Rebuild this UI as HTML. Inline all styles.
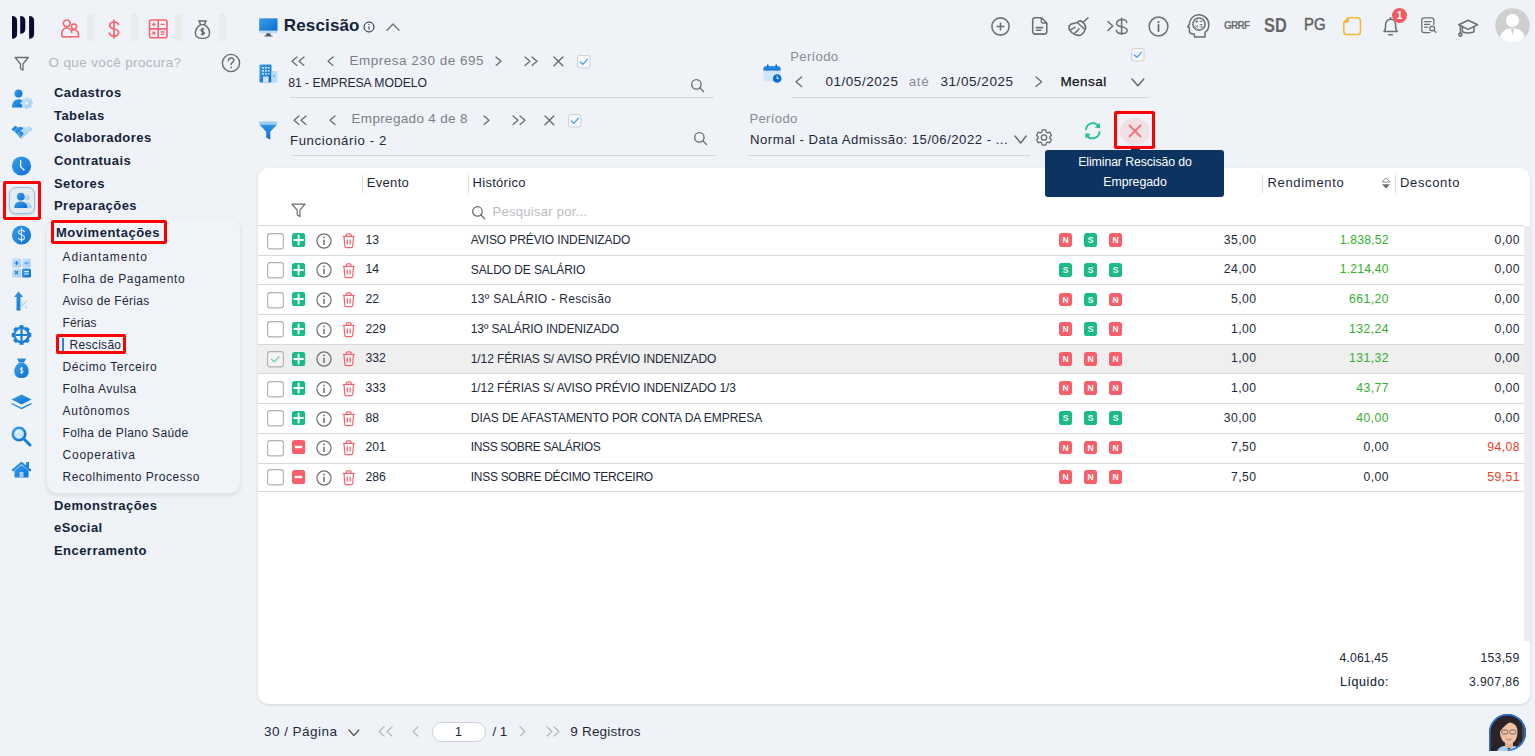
<!DOCTYPE html>
<html><head><meta charset="utf-8">
<style>
*{box-sizing:border-box;margin:0;padding:0}
html,body{width:1535px;height:756px;overflow:hidden;background:#eff3f8;font-family:"Liberation Sans",sans-serif;color:#1d2939;position:relative}
.a{position:absolute;white-space:nowrap}
svg{position:absolute;overflow:visible}
</style></head>
<body>
<svg style="left:0px;top:0px;" width="50" height="50" viewBox="0 0 50 50"><path d="M12 16 Q17.1 16 17.1 21.1 L17.1 33.699999999999996 Q17.1 38.8 12 38.8 Z" fill="#0c0a30"/><path d="M20.2 16 Q25.3 16 25.3 21.1 L25.3 28.699999999999996 Q25.3 33.8 20.2 33.8 Z" fill="#0c0a30"/><path d="M29.1 16 Q34.1 16 34.1 21.0 L34.1 33.8 Q34.1 38.8 29.1 38.8 Z" fill="#0c0a30"/></svg>
<div style="position:absolute;left:87px;top:14px;width:6.5px;height:26.5px;background:#ebebeb"></div>
<div style="position:absolute;left:131px;top:14px;width:6.5px;height:26.5px;background:#ebebeb"></div>
<div style="position:absolute;left:175px;top:14px;width:6.5px;height:26.5px;background:#ebebeb"></div>
<div style="position:absolute;left:219px;top:14px;width:6.5px;height:26.5px;background:#ebebeb"></div>
<svg style="left:60px;top:19px;" width="22" height="20" viewBox="0 0 22 20"><g fill="none" stroke="#f7636e" stroke-width="1.6"><circle cx="6.7" cy="4.3" r="3.3"/><path d="M1.8 17.6 V14 a5 5 0 0 1 10 0"/><circle cx="14" cy="7.6" r="2.6"/><path d="M9.5 17.8 H18.5 V15 a4.4 4.4 0 0 0 -6.6 -3.6"/><path d="M1.8 17.8 H11"/></g></svg>
<svg style="left:104px;top:18px;" width="20" height="22" viewBox="0 0 20 22"><g fill="none" stroke="#f7636e" stroke-width="1.7" stroke-linecap="round"><path d="M10 2 V20"/><path d="M14.5 6.5 C14 4.5 12 4 10 4 C7.5 4 5.6 5.3 5.6 7.6 C5.6 12.2 14.6 9.8 14.6 14.4 C14.6 16.8 12.5 18 10 18 C7.7 18 5.8 17.2 5.4 15"/></g></svg>
<svg style="left:148px;top:19px;" width="21" height="20" viewBox="0 0 21 20"><g fill="none" stroke="#f7636e" stroke-width="1.6"><rect x="1.5" y="1" width="17.5" height="17.8" rx="2"/><path d="M10.2 1 V18.8 M1.5 9.9 H19"/></g><g stroke="#f7636e" stroke-width="1.3"><path d="M4 5.4 H7.6 M5.8 3.6 V7.2 M12.6 5.4 H16.6 M4.3 12.6 L7.3 15.6 M7.3 12.6 L4.3 15.6 M12.6 13 H16.6 M12.6 15.4 H16.6"/></g></svg>
<svg style="left:194px;top:19px;" width="17" height="21" viewBox="0 0 17 21"><g fill="none" stroke="#6b6b6b" stroke-width="1.4"><path d="M5 2 H12 L10.4 5.6 H6.6 Z"/><path d="M6.6 5.6 C2 8.5 1 12 1.6 15.6 C2.2 18.6 4.6 19.4 8.5 19.4 C12.4 19.4 14.8 18.6 15.4 15.6 C16 12 15 8.5 10.4 5.6"/><path d="M10.2 10.4 C9.6 9.6 7 9.6 7 11.2 C7 12.8 10.4 12.2 10.4 14 C10.4 15.6 7.6 15.5 6.8 14.6 M8.6 8.8 V16.6"/></g></svg>
<svg style="left:14px;top:56px;" width="16" height="16" viewBox="0 0 16 16"><path d="M1.2 1.5 H14.3 L9 8 V14.2 L6.5 12.8 V8 Z" fill="none" stroke="#6b6b6b" stroke-width="1.3" stroke-linejoin="round"/></svg>
<div class="a" style="top:56.07px;font-size:13.5px;line-height:13.5px;color:#b3b7bc;letter-spacing:0.36px;left:48.50px;">O que você procura?</div>
<svg style="left:221px;top:53px;" width="20" height="20" viewBox="0 0 20 20"><circle cx="10" cy="10" r="8.6" fill="none" stroke="#6b6b6b" stroke-width="1.4"/><path d="M7.4 7.8 C7.4 5.9 8.6 5 10.1 5 C11.7 5 12.8 6 12.8 7.4 C12.8 9.4 10.1 9.4 10.1 11.6" fill="none" stroke="#6b6b6b" stroke-width="1.4" stroke-linecap="round"/><circle cx="10.1" cy="14.4" r="0.9" fill="#6b6b6b"/></svg>
<svg style="left:0;top:0" width="1" height="1"><defs><linearGradient id="bg1" x1="0" y1="0" x2="1" y2="1"><stop offset="0" stop-color="#3aa0ee"/><stop offset="1" stop-color="#0b6fcf"/></linearGradient><linearGradient id="bg2" x1="0" y1="0" x2="1" y2="1"><stop offset="0" stop-color="#cfe6fa"/><stop offset="1" stop-color="#9ccbf3"/></linearGradient></defs></svg>
<svg style="left:11px;top:89px;" width="22" height="20" viewBox="0 0 22 20"><circle cx="7.5" cy="4.4" r="4" fill="url(#bg1)"/><path d="M1 18.5 C1 13 3.5 10.2 7.5 10.2 C9.5 10.2 10.6 10.8 11.5 11.6 L11.5 18.5 Z" fill="url(#bg1)"/><g transform="translate(15.6 14.2)"><path d="M-1.1 -5.4 H1.1 L1.5 -3.9 L2.9 -3.3 L4.3 -4 L5.4 -2.9 L4.7 -1.5 L5.3 -0.1 L6 0.3 V1.9 L4.6 2.3 L4 3.7 L4.7 5.1 L3.6 6.2 L2.2 5.5 L0.8 6.1 L0.4 7.5 H-1.4 L-1.8 6.1 L-3.2 5.5 L-4.6 6.2 L-5.7 5.1 L-5 3.7 L-5.6 2.3 L-7 1.9 V0.1 L-5.6 -0.3 L-5 -1.7 L-5.7 -3.1 L-4.6 -4.2 L-3.2 -3.5 L-1.5 -3.9 Z" fill="url(#bg2)" transform="translate(0.5 -1) scale(0.95)"/><circle cx="0" cy="0" r="1.6" fill="#eff3f8"/></g></svg>
<svg style="left:11px;top:124.5px;" width="22" height="15" viewBox="0 0 22 15"><path d="M0.3 4.2 L4.6 0.6 L6.6 2.2 L3 6.6 Z" fill="url(#bg1)"/><path d="M21.7 4.2 L17.4 0.6 L15.4 2.2 L19 6.6 Z" fill="url(#bg2)"/><path d="M5.8 2.6 L10.5 1.6 L15.6 2.4 L18.6 6.6 L11.5 13.6 C10.8 14.3 9.6 14.2 9 13.4 L3.6 6.8 Z" fill="url(#bg2)"/><path d="M5.6 2.8 L10 1.8 L12.6 3.6 L9.4 5.8 L12.6 8.2 L9.8 12.8 L3.6 6.8 Z" fill="url(#bg1)"/><path d="M6.6 9.2 L8.6 7.4 M8.2 11 L10.2 9.2 M9.8 12.6 L11.6 11" stroke="#eff3f8" stroke-width="0.8"/></svg>
<svg style="left:11px;top:156px;" width="21" height="20" viewBox="0 0 21 20"><circle cx="10.5" cy="10" r="9.6" fill="url(#bg1)"/><path d="M9.6 4.6 V10.6 L13 14" fill="none" stroke="#fff" stroke-width="1.3" stroke-linecap="round"/></svg>
<div style="position:absolute;left:9px;top:187px;width:26px;height:27px;border-radius:7px;background:#e8ebee;border:1px solid #90c4ef;box-shadow:0 1px 3px rgba(0,0,0,0.18)"></div>
<svg style="left:12.5px;top:192px;" width="20" height="17" viewBox="0 0 20 17"><circle cx="19.3" cy="5.6" r="2.9" fill="url(#bg2)" transform="translate(-5.4 0)"/><path d="M10.6 16 C10.6 12.4 11.6 10 14 10 C16.8 10 18.6 12 18.6 16 Z" fill="url(#bg2)"/><circle cx="7.8" cy="4.6" r="3.9" fill="url(#bg1)"/><path d="M1.2 16 C1.2 11.4 3.8 9.4 7.8 9.4 C11.8 9.4 14.4 11.4 14.4 16 Z" fill="url(#bg1)"/></svg>
<div style="position:absolute;left:3px;top:181px;width:38px;height:39px;border:3px solid #f00;border-radius:2px"></div>
<svg style="left:11px;top:224.5px;" width="21" height="20" viewBox="0 0 21 20"><circle cx="10.5" cy="10" r="9.6" fill="url(#bg1)"/><path d="M13.4 6.6 C12.8 5.5 11.8 5.1 10.5 5.1 C8.8 5.1 7.6 6 7.6 7.4 C7.6 10.3 13.5 9.3 13.5 12.5 C13.5 14 12.2 15 10.5 15 C8.9 15 7.8 14.4 7.3 13.3 M10.5 3.4 V16.6" fill="none" stroke="#dbeafa" stroke-width="1.15" stroke-linecap="round"/></svg>
<svg style="left:11px;top:257.5px;" width="21" height="20" viewBox="0 0 21 20"><rect x="1" y="0.5" width="9" height="9" rx="1.5" fill="url(#bg2)"/><rect x="11" y="0.5" width="9" height="9" rx="1.5" fill="url(#bg2)"/><rect x="1" y="10.5" width="9" height="9" rx="1.5" fill="url(#bg2)"/><rect x="11" y="10.5" width="9" height="9" rx="1.5" fill="url(#bg1)"/><path d="M3.5 5 H7.5 M5.5 3 V7 M13.5 5 H17.5 M3.8 13 L7 16.2 M7 13 L3.8 16.2" stroke="#1a7fd9" stroke-width="1.2"/><path d="M13.3 13.7 H17.7 M13.3 16 H17.7" stroke="#fff" stroke-width="1.2"/></svg>
<svg style="left:14px;top:291px;" width="15" height="20" viewBox="0 0 15 20"><path d="M4.5 0.5 L9 6 H6.5 V19.5 H2.5 V6 H0 Z" fill="url(#bg1)"/><path d="M6 17 L13 9.5" stroke="url(#bg2)" stroke-width="1.6"/><circle cx="7.3" cy="11.5" r="1.2" fill="url(#bg2)"/><circle cx="12" cy="16.3" r="1.2" fill="url(#bg2)"/></svg>
<svg style="left:11px;top:324.5px;" width="21" height="20" viewBox="0 0 21 20"><g transform="translate(10.5 10)"><circle r="7.2" fill="none" stroke="url(#bg1)" stroke-width="2.6"/><g fill="#1a7fd9"><rect x="-2" y="-9.8" width="4" height="3.2"/><rect x="-2" y="6.6" width="4" height="3.2"/><rect x="-9.8" y="-2" width="3.2" height="4"/><rect x="6.6" y="-2" width="3.2" height="4"/><rect x="-2" y="-9.8" width="4" height="3.2" transform="rotate(45)"/><rect x="-2" y="6.6" width="4" height="3.2" transform="rotate(45)"/><rect x="-9.8" y="-2" width="3.2" height="4" transform="rotate(45)"/><rect x="6.6" y="-2" width="3.2" height="4" transform="rotate(45)"/></g><path d="M0 -6 V6 M-6 0 H6" stroke="#1a7fd9" stroke-width="2.2"/></g></svg>
<svg style="left:14px;top:358px;" width="15" height="21" viewBox="0 0 15 21"><path d="M3 0.5 H12 L10 4.5 H5 Z" fill="url(#bg1)"/><path d="M5 5 C1 7.5 0 11 0.5 14.5 C1 18.5 3.5 20 7.5 20 C11.5 20 14 18.5 14.5 14.5 C15 11 14 7.5 10 5 Z" fill="url(#bg1)"/><path d="M9 10.5 C8.5 9.8 6.3 9.8 6.3 11.2 C6.3 12.6 9.2 12.1 9.2 13.7 C9.2 15.1 6.8 15 6 14.2 M7.6 9 V16" fill="none" stroke="#fff" stroke-width="0.9"/></svg>
<svg style="left:11px;top:393.5px;" width="21" height="16" viewBox="0 0 21 16"><path d="M10.5 0.5 L20.5 5.5 L10.5 10.5 L0.5 5.5 Z" fill="url(#bg1)"/><path d="M0.5 8.8 L10.5 13.8 L20.5 8.8 L20.5 10.3 L10.5 15.3 L0.5 10.3 Z" fill="url(#bg1)"/></svg>
<svg style="left:11px;top:425.5px;" width="21" height="20" viewBox="0 0 21 20"><circle cx="8" cy="8" r="6.2" fill="#cfe6fa" stroke="url(#bg1)" stroke-width="2.6"/><path d="M12.5 12.5 L19 19" stroke="#1a7fd9" stroke-width="3" stroke-linecap="round"/><path d="M5 9 C5 6.5 6.5 5 8.5 5" stroke="#fff" stroke-width="1" fill="none"/></svg>
<svg style="left:11px;top:460.5px;" width="21" height="17" viewBox="0 0 21 17"><path d="M10.5 0.5 L20.5 9 L19 10.5 L10.5 3.3 L2 10.5 L0.5 9 Z" fill="url(#bg1)"/><rect x="15" y="1" width="3" height="5" fill="url(#bg1)"/><path d="M3.5 9.5 L10.5 4 L17.5 9.5 V16.5 H3.5 Z" fill="url(#bg1)"/><rect x="8.5" y="11" width="4" height="5.5" fill="#9ccbf3"/></svg>
<div class="a" style="top:85.80px;font-size:13px;line-height:13px;color:#14233a;font-weight:bold;letter-spacing:0.45px;left:54.00px;">Cadastros</div>
<div class="a" style="top:108.80px;font-size:13px;line-height:13px;color:#14233a;font-weight:bold;letter-spacing:0.45px;left:54.00px;">Tabelas</div>
<div class="a" style="top:131.00px;font-size:13px;line-height:13px;color:#14233a;font-weight:bold;letter-spacing:0.45px;left:54.00px;">Colaboradores</div>
<div class="a" style="top:154.00px;font-size:13px;line-height:13px;color:#14233a;font-weight:bold;letter-spacing:0.45px;left:54.00px;">Contratuais</div>
<div class="a" style="top:176.50px;font-size:13px;line-height:13px;color:#14233a;font-weight:bold;letter-spacing:0.45px;left:54.00px;">Setores</div>
<div class="a" style="top:199.00px;font-size:13px;line-height:13px;color:#14233a;font-weight:bold;letter-spacing:0.45px;left:54.00px;">Preparações</div>
<div style="position:absolute;left:47px;top:219px;width:193px;height:274px;border-radius:10px;background:#f0f4f8;box-shadow:0 2px 5px rgba(0,0,0,0.11)"></div>
<div class="a" style="top:226.20px;font-size:13px;line-height:13px;color:#14233a;font-weight:bold;letter-spacing:0.5px;left:56.00px;">Movimentações</div>
<div style="position:absolute;left:51px;top:220px;width:116px;height:24px;border:3px solid #f00;border-radius:2px"></div>
<div class="a" style="top:250.94px;font-size:12px;line-height:12px;color:#1d2939;letter-spacing:0.95px;left:62.50px;">Adiantamento</div>
<div class="a" style="top:272.90px;font-size:12px;line-height:12px;color:#1d2939;letter-spacing:0.63px;left:62.50px;">Folha de Pagamento</div>
<div class="a" style="top:294.86px;font-size:12px;line-height:12px;color:#1d2939;letter-spacing:0.3px;left:62.50px;">Aviso de Férias</div>
<div class="a" style="top:316.82px;font-size:12px;line-height:12px;color:#1d2939;letter-spacing:0.15px;left:62.50px;">Férias</div>
<div class="a" style="top:338.78px;font-size:12px;line-height:12px;color:#1d2939;letter-spacing:0.3px;left:69.60px;">Rescisão</div>
<div class="a" style="top:360.74px;font-size:12px;line-height:12px;color:#1d2939;letter-spacing:0.55px;left:62.50px;">Décimo Terceiro</div>
<div class="a" style="top:382.70px;font-size:12px;line-height:12px;color:#1d2939;letter-spacing:0.48px;left:62.50px;">Folha Avulsa</div>
<div class="a" style="top:404.66px;font-size:12px;line-height:12px;color:#1d2939;letter-spacing:0.79px;left:62.50px;">Autônomos</div>
<div class="a" style="top:426.62px;font-size:12px;line-height:12px;color:#1d2939;letter-spacing:0.37px;left:62.50px;">Folha de Plano Saúde</div>
<div class="a" style="top:448.58px;font-size:12px;line-height:12px;color:#1d2939;letter-spacing:0.77px;left:62.50px;">Cooperativa</div>
<div class="a" style="top:470.54px;font-size:12px;line-height:12px;color:#1d2939;letter-spacing:0.51px;left:62.50px;">Recolhimento Processo</div>
<div style="position:absolute;left:62px;top:338px;width:2px;height:12.5px;background:#1e88f5"></div>
<div style="position:absolute;left:56px;top:334px;width:70px;height:20px;border:3px solid #f00;border-radius:2px"></div>
<div class="a" style="top:499.40px;font-size:13px;line-height:13px;color:#14233a;font-weight:bold;letter-spacing:0.45px;left:54.00px;">Demonstrações</div>
<div class="a" style="top:521.30px;font-size:13px;line-height:13px;color:#14233a;font-weight:bold;letter-spacing:0.45px;left:54.00px;">eSocial</div>
<div class="a" style="top:544.10px;font-size:13px;line-height:13px;color:#14233a;font-weight:bold;letter-spacing:0.45px;left:54.00px;">Encerramento</div>
<svg style="left:258.5px;top:17.5px;" width="19" height="19" viewBox="0 0 19 19"><defs><linearGradient id="mon" x1="0" y1="0" x2="1" y2="1"><stop offset="0" stop-color="#3a9eea"/><stop offset="1" stop-color="#0b6cd0"/></linearGradient></defs><rect x="0.2" y="0.3" width="18.3" height="12.5" fill="url(#mon)"/><rect x="0.2" y="12.8" width="18.3" height="2.5" fill="#bcdcf6"/><path d="M7.5 15.3 H11.3 L11.8 17.4 H13.5 V18.6 H5.3 V17.4 H7 Z" fill="#4c5a66"/></svg>
<div class="a" style="top:16.81px;font-size:17px;line-height:17px;color:#14233a;font-weight:bold;letter-spacing:0.15px;left:283.80px;">Rescisão</div>
<svg style="left:362.5px;top:20.5px;" width="12" height="12" viewBox="0 0 12 12"><circle cx="6" cy="6" r="5" fill="none" stroke="#14233a" stroke-width="1"/><path d="M6 5.2 V8.8" stroke="#14233a" stroke-width="0.9"/><circle cx="6" cy="3.5" r="0.6" fill="#14233a"/></svg>
<svg style="left:387.2px;top:23.6px;" width="12" height="6.2" viewBox="0 0 12 6.2"><path d="M0 6.2 L6.0 0 L12 6.2" fill="none" stroke="#777" stroke-width="1.45" stroke-linecap="round" stroke-linejoin="round"/></svg>
<svg style="left:258.5px;top:63.5px;" width="19" height="19" viewBox="0 0 19 19"><defs><linearGradient id="bld" x1="0" y1="0" x2="1" y2="1"><stop offset="0" stop-color="#3a9eea"/><stop offset="1" stop-color="#0b6cd0"/></linearGradient></defs><rect x="0.5" y="0.5" width="12" height="18" rx="1" fill="url(#bld)"/><rect x="12.5" y="7" width="5.8" height="11.5" rx="0.8" fill="#bcdcf6"/><g fill="#cfe6fa"><rect x="3" y="3" width="2" height="1.6"/><rect x="6" y="3" width="2" height="1.6"/><rect x="9" y="3" width="1.6" height="1.6"/><rect x="3" y="6" width="2" height="1.6"/><rect x="6" y="6" width="2" height="1.6"/><rect x="9" y="6" width="1.6" height="1.6"/><rect x="3" y="9" width="2" height="1.6"/><rect x="6" y="9" width="2" height="1.6"/><rect x="9" y="9" width="1.6" height="1.6"/></g><rect x="4" y="12.5" width="5.5" height="6" fill="#cfe6fa"/><rect x="14.5" y="11.5" width="1.2" height="1.6" fill="#3a9eea"/></svg>
<svg style="left:292px;top:57.4px;" width="5" height="8.4" viewBox="0 0 5 8.4"><path d="M5 0 L0 4.2 L5 8.4" fill="none" stroke="#6b6b6b" stroke-width="1.3" stroke-linecap="round" stroke-linejoin="round"/></svg>
<svg style="left:299.2px;top:57.4px;" width="5" height="8.4" viewBox="0 0 5 8.4"><path d="M5 0 L0 4.2 L5 8.4" fill="none" stroke="#6b6b6b" stroke-width="1.3" stroke-linecap="round" stroke-linejoin="round"/></svg>
<svg style="left:328.4px;top:57.4px;" width="5" height="8.4" viewBox="0 0 5 8.4"><path d="M5 0 L0 4.2 L5 8.4" fill="none" stroke="#6b6b6b" stroke-width="1.3" stroke-linecap="round" stroke-linejoin="round"/></svg>
<div class="a" style="top:54.07px;font-size:13.5px;line-height:13.5px;color:#7b7f85;letter-spacing:0.5px;left:349.60px;">Empresa 230 de 695</div>
<svg style="left:495.7px;top:57.4px;" width="5" height="8.4" viewBox="0 0 5 8.4"><path d="M0 0 L5 4.2 L0 8.4" fill="none" stroke="#6b6b6b" stroke-width="1.3" stroke-linecap="round" stroke-linejoin="round"/></svg>
<svg style="left:525px;top:57.4px;" width="5" height="8.4" viewBox="0 0 5 8.4"><path d="M0 0 L5 4.2 L0 8.4" fill="none" stroke="#6b6b6b" stroke-width="1.3" stroke-linecap="round" stroke-linejoin="round"/></svg>
<svg style="left:531.8px;top:57.4px;" width="5" height="8.4" viewBox="0 0 5 8.4"><path d="M0 0 L5 4.2 L0 8.4" fill="none" stroke="#6b6b6b" stroke-width="1.3" stroke-linecap="round" stroke-linejoin="round"/></svg>
<svg style="left:553.5px;top:57.3px;" width="8.8" height="8.8" viewBox="0 0 8.8 8.8"><path d="M0 0 L8.8 8.8 M8.8 0 L0 8.8" stroke="#6b6b6b" stroke-width="1.4" stroke-linecap="round"/></svg>
<svg style="left:577.2px;top:55.2px;" width="13.5" height="13.5" viewBox="0 0 13.5 13.5"><rect x="0.5" y="0.5" width="12.5" height="12.5" rx="2" fill="#f4f6f9" stroke="#cfd3d8" stroke-width="1"/><path d="M3.3 6.95 L5.8 9.35 L10.4 4.35" fill="none" stroke="#4fa3ec" stroke-width="1.4" stroke-linecap="round" stroke-linejoin="round"/></svg>
<div class="a" style="top:76.87px;font-size:12.2px;line-height:12.2px;color:#1d2939;letter-spacing:-0.05px;left:288.30px;">81 - EMPRESA MODELO</div>
<svg style="left:691px;top:79.2px;" width="13" height="13" viewBox="0 0 13 13"><circle cx="5.38" cy="5.38" r="4.68" fill="none" stroke="#6b6b6b" stroke-width="1.3"/><path d="M8.655999999999999 8.655999999999999 L12.5 12.5" stroke="#6b6b6b" stroke-width="1.3" stroke-linecap="round"/></svg>
<div style="position:absolute;left:290px;top:97px;width:424px;height:1.2px;background:#d3d7dc"></div>
<svg style="left:259px;top:121px;" width="18.5" height="20" viewBox="0 0 18.5 20"><defs><linearGradient id="fun" x1="0" y1="0" x2="0" y2="1"><stop offset="0" stop-color="#2e95e8"/><stop offset="1" stop-color="#0b6cd0"/></linearGradient></defs><rect x="0.3" y="0.5" width="17.8" height="2.6" fill="#9ccbf3"/><path d="M0.3 3.4 H18.1 L11.3 10.8 V18.8 L7.2 16.6 V10.8 Z" fill="url(#fun)"/></svg>
<svg style="left:294px;top:116px;" width="5" height="8.4" viewBox="0 0 5 8.4"><path d="M5 0 L0 4.2 L5 8.4" fill="none" stroke="#6b6b6b" stroke-width="1.3" stroke-linecap="round" stroke-linejoin="round"/></svg>
<svg style="left:301.2px;top:116px;" width="5" height="8.4" viewBox="0 0 5 8.4"><path d="M5 0 L0 4.2 L5 8.4" fill="none" stroke="#6b6b6b" stroke-width="1.3" stroke-linecap="round" stroke-linejoin="round"/></svg>
<svg style="left:330px;top:116px;" width="5" height="8.4" viewBox="0 0 5 8.4"><path d="M5 0 L0 4.2 L5 8.4" fill="none" stroke="#6b6b6b" stroke-width="1.3" stroke-linecap="round" stroke-linejoin="round"/></svg>
<div class="a" style="top:111.77px;font-size:13.5px;line-height:13.5px;color:#7b7f85;letter-spacing:0.33px;left:351.50px;">Empregado 4 de 8</div>
<svg style="left:484.2px;top:116px;" width="5" height="8.4" viewBox="0 0 5 8.4"><path d="M0 0 L5 4.2 L0 8.4" fill="none" stroke="#6b6b6b" stroke-width="1.3" stroke-linecap="round" stroke-linejoin="round"/></svg>
<svg style="left:512.7px;top:116px;" width="5" height="8.4" viewBox="0 0 5 8.4"><path d="M0 0 L5 4.2 L0 8.4" fill="none" stroke="#6b6b6b" stroke-width="1.3" stroke-linecap="round" stroke-linejoin="round"/></svg>
<svg style="left:519.5px;top:116px;" width="5" height="8.4" viewBox="0 0 5 8.4"><path d="M0 0 L5 4.2 L0 8.4" fill="none" stroke="#6b6b6b" stroke-width="1.3" stroke-linecap="round" stroke-linejoin="round"/></svg>
<svg style="left:544.5px;top:116.3px;" width="8.8" height="8.8" viewBox="0 0 8.8 8.8"><path d="M0 0 L8.8 8.8 M8.8 0 L0 8.8" stroke="#6b6b6b" stroke-width="1.4" stroke-linecap="round"/></svg>
<svg style="left:568.2px;top:114px;" width="13.5" height="13.5" viewBox="0 0 13.5 13.5"><rect x="0.5" y="0.5" width="12.5" height="12.5" rx="2" fill="#f4f6f9" stroke="#cfd3d8" stroke-width="1"/><path d="M3.3 6.95 L5.8 9.35 L10.4 4.35" fill="none" stroke="#4fa3ec" stroke-width="1.4" stroke-linecap="round" stroke-linejoin="round"/></svg>
<div class="a" style="top:133.83px;font-size:13.2px;line-height:13.2px;color:#1d2939;letter-spacing:0.6px;left:290.00px;">Funcionário - 2</div>
<svg style="left:694.3px;top:132px;" width="13" height="13" viewBox="0 0 13 13"><circle cx="5.38" cy="5.38" r="4.68" fill="none" stroke="#6b6b6b" stroke-width="1.3"/><path d="M8.655999999999999 8.655999999999999 L12.5 12.5" stroke="#6b6b6b" stroke-width="1.3" stroke-linecap="round"/></svg>
<div style="position:absolute;left:292px;top:155px;width:424px;height:1.2px;background:#d3d7dc"></div>
<svg style="left:762.5px;top:63.5px;" width="19" height="19" viewBox="0 0 19 19"><defs><linearGradient id="cal" x1="0" y1="0" x2="0" y2="1"><stop offset="0" stop-color="#3a9eea"/><stop offset="1" stop-color="#0b6cd0"/></linearGradient></defs><rect x="0.5" y="2" width="17" height="15.5" rx="2.5" fill="#cfe6fa"/><path d="M0.5 4.5 a2.5 2.5 0 0 1 2.5 -2.5 H15 a2.5 2.5 0 0 1 2.5 2.5 V6.5 H0.5 Z" fill="url(#cal)"/><rect x="4" y="0.3" width="1.6" height="3.5" rx="0.8" fill="#0b6cd0"/><rect x="12.4" y="0.3" width="1.6" height="3.5" rx="0.8" fill="#0b6cd0"/><circle cx="14.2" cy="14.5" r="4.3" fill="#0b6cd0"/><path d="M14.2 12.2 V14.6 H15.8" stroke="#fff" stroke-width="1" fill="none"/></svg>
<div class="a" style="top:50.23px;font-size:13.2px;line-height:13.2px;color:#888c92;letter-spacing:0.3px;left:790.20px;">Período</div>
<svg style="left:1131px;top:47.8px;" width="13.5" height="13.5" viewBox="0 0 13.5 13.5"><rect x="0.5" y="0.5" width="12.5" height="12.5" rx="2" fill="#f4f6f9" stroke="#cfd3d8" stroke-width="1"/><path d="M3.3 6.95 L5.8 9.35 L10.4 4.35" fill="none" stroke="#4fa3ec" stroke-width="1.4" stroke-linecap="round" stroke-linejoin="round"/></svg>
<svg style="left:796.3px;top:77.3px;" width="5.6" height="9.6" viewBox="0 0 5.6 9.6"><path d="M5.6 0 L0 4.8 L5.6 9.6" fill="none" stroke="#6b6b6b" stroke-width="1.35" stroke-linecap="round" stroke-linejoin="round"/></svg>
<div class="a" style="top:74.97px;font-size:13.5px;line-height:13.5px;color:#1d2939;letter-spacing:0.55px;left:825.40px;">01/05/2025</div>
<div class="a" style="top:74.97px;font-size:13.5px;line-height:13.5px;color:#888c92;letter-spacing:0.6px;left:908.70px;">até</div>
<div class="a" style="top:74.97px;font-size:13.5px;line-height:13.5px;color:#1d2939;letter-spacing:0.55px;left:940.50px;">31/05/2025</div>
<svg style="left:1036.3px;top:77.3px;" width="5.6" height="9.6" viewBox="0 0 5.6 9.6"><path d="M0 0 L5.6 4.8 L0 9.6" fill="none" stroke="#6b6b6b" stroke-width="1.35" stroke-linecap="round" stroke-linejoin="round"/></svg>
<div class="a" style="top:74.97px;font-size:13.5px;line-height:13.5px;color:#111;letter-spacing:0.45px;left:1060.40px;-webkit-text-stroke:0.25px #111;">Mensal</div>
<svg style="left:1131.5px;top:78.6px;" width="11.8" height="6.8" viewBox="0 0 11.8 6.8"><path d="M0 0 L5.9 6.8 L11.8 0" fill="none" stroke="#6b6b6b" stroke-width="1.5" stroke-linecap="round" stroke-linejoin="round"/></svg>
<div style="position:absolute;left:792px;top:96.6px;width:357px;height:1.2px;background:#d3d7dc"></div>
<div class="a" style="top:112.13px;font-size:13.2px;line-height:13.2px;color:#888c92;letter-spacing:0.3px;left:749.40px;">Período</div>
<div class="a" style="top:133.43px;font-size:13.2px;line-height:13.2px;color:#1d2939;letter-spacing:0.48px;left:750.00px;">Normal - Data Admissão: 15/06/2022 - ...</div>
<svg style="left:1014.6px;top:136px;" width="11.2" height="7" viewBox="0 0 11.2 7"><path d="M0 0 L5.6 7 L11.2 0" fill="none" stroke="#6b6b6b" stroke-width="1.5" stroke-linecap="round" stroke-linejoin="round"/></svg>
<svg style="left:1035px;top:129px;" width="17" height="17" viewBox="0 0 17 17"><g transform="translate(9 8.5)" fill="none" stroke="#6b6b6b" stroke-width="1.3" stroke-linejoin="round"><path d="M2.21 -5.47 L1.75 -7.60 L-1.75 -7.60 L-2.21 -5.47 L-3.63 -4.65 L-5.70 -5.32 L-7.46 -2.28 L-5.84 -0.82 L-5.84 0.82 L-7.46 2.28 L-5.70 5.32 L-3.63 4.65 L-2.21 5.47 L-1.75 7.60 L1.75 7.60 L2.21 5.47 L3.63 4.65 L5.70 5.32 L7.46 2.28 L5.84 0.82 L5.84 -0.82 L7.46 -2.28 L5.70 -5.32 L3.63 -4.65 Z"/><circle r="2.7"/></g></svg>
<div style="position:absolute;left:749px;top:155px;width:281px;height:1.2px;background:#d3d7dc"></div>
<svg style="left:1083.6px;top:122px;" width="17.5" height="17.5" viewBox="0 0 17.5 17.5"><g fill="none" stroke="#22c08a" stroke-width="1.8" stroke-linecap="round"><path d="M2 7.5 A7 7 0 0 1 14.8 4.3"/><path d="M15.5 10 A7 7 0 0 1 2.7 13.2"/></g><path d="M15.8 0.8 L16 6.2 L10.8 5.4 Z" fill="#22c08a"/><path d="M1.7 16.7 L1.5 11.3 L6.7 12.1 Z" fill="#22c08a"/></svg>
<div style="position:absolute;left:1120px;top:118px;width:30px;height:27px;border-radius:50%;background:#f1e1e4"></div>
<svg style="left:1129px;top:125px;" width="12" height="12" viewBox="0 0 12 12"><path d="M0.5 0.5 L11.5 11.5 M11.5 0.5 L0.5 11.5" stroke="#f5727a" stroke-width="1.8" stroke-linecap="round"/></svg>
<div style="position:absolute;left:1114px;top:111px;width:41px;height:38px;border:3px solid #f00;border-radius:2px"></div>
<svg style="left:990.5px;top:16.5px;" width="19" height="19" viewBox="0 0 19 19"><circle cx="9.5" cy="9.5" r="8.6" fill="none" stroke="#6e6e6e" stroke-width="1.55"/><path d="M9.5 5.6 V13.4 M5.6 9.5 H13.4" stroke="#6e6e6e" stroke-width="1.5"/></svg>
<svg style="left:1031.5px;top:17px;" width="16" height="18" viewBox="0 0 16 18"><path d="M3 0.7 H9.5 L14.8 6 V14.5 A2.6 2.6 0 0 1 12.2 17.1 H3.3 A2.6 2.6 0 0 1 0.7 14.5 V3 A2.3 2.3 0 0 1 3 0.7 Z" fill="none" stroke="#6e6e6e" stroke-width="1.55" stroke-linejoin="round"/><path d="M9.3 0.9 V4.5 A1.5 1.5 0 0 0 10.8 6 H14.6" fill="none" stroke="#6e6e6e" stroke-width="1.3"/><path d="M4.3 10.6 H10.6 M4.3 13.3 H8.8" stroke="#6e6e6e" stroke-width="1.55" stroke-linecap="round"/></svg>
<svg style="left:1067.5px;top:17px;" width="21" height="19" viewBox="0 0 21 19"><g fill="none" stroke="#6e6e6e" stroke-width="1.55" stroke-linecap="round" stroke-linejoin="round"><path d="M20 0.7 L15.4 5.2"/><path d="M9.3 5.4 C10.5 3.8 12.5 3.4 14 4.6 L16.2 6.8 C17.6 8.2 18 10.4 17.2 12.4 C16.4 14.6 14.8 16.8 13 18 C11 18.8 7 18.2 4.4 16 C2.2 14.2 0.8 12 1 10 C1.2 8 3 7 5 6.6 C6.6 6.3 8.2 6 9.3 5.4 Z"/><path d="M9.6 5.8 L16.3 12"/><path d="M2.9 12.6 L7 10.4"/><path d="M6.6 16 C8.4 14.6 10 13.4 10.9 11.8"/></g></svg>
<svg style="left:1107px;top:16.5px;" width="22" height="19" viewBox="0 0 22 19"><path d="M1 4.5 L5.8 9 L1 13.5" fill="none" stroke="#6e6e6e" stroke-width="1.55" stroke-linecap="round" stroke-linejoin="round"/><path d="M14.6 0.6 V18" stroke="#6e6e6e" stroke-width="1.5"/><path d="M19.8 5.4 C19.4 3.6 17.4 2.6 14.8 2.6 C11.8 2.6 9.6 4 9.6 6.2 C9.6 11 20.2 8.8 20.2 13.2 C20.2 15.4 18 16.6 14.8 16.6 C11.8 16.6 9.8 15.5 9.3 13.5" fill="none" stroke="#6e6e6e" stroke-width="1.5" stroke-linecap="round"/></svg>
<svg style="left:1147.5px;top:16px;" width="21" height="21" viewBox="0 0 21 21"><circle cx="10.5" cy="10.5" r="9.4" fill="none" stroke="#6e6e6e" stroke-width="1.5"/><path d="M10.5 9 V15.2" stroke="#6e6e6e" stroke-width="1.8" stroke-linecap="round"/><circle cx="10.5" cy="6.2" r="1.1" fill="#6e6e6e"/></svg>
<svg style="left:1186.5px;top:13.5px;" width="23" height="24" viewBox="0 0 23 24"><g fill="none" stroke="#6e6e6e" stroke-width="1.55" stroke-linejoin="round"><path d="M18 22.9 V18.4 C20.4 17 21.8 14 21.8 10.5 C21.8 5 17.4 0.8 12 0.8 C6.6 0.8 2.6 4.8 2.4 10 L0.8 12.8 L2.4 13.6 V17 C2.4 18.8 3.4 19.6 5 19.8 L7.4 20.2 V22.9 Z"/><circle cx="12" cy="10" r="6.1"/></g><g stroke="#6e6e6e" stroke-width="1"><path d="M8.4 7.6 H11 M9.7 6.3 V8.9 M12.8 7.4 H15.6 M8.6 11.4 L10.8 13.6 M10.8 11.4 L8.6 13.6 M12.8 10.6 H15.6 M12.8 12.8 H15.6"/></g></svg>
<div class="a" style="top:20.84px;font-size:10px;line-height:10px;color:#6e6e6e;font-weight:bold;letter-spacing:-0.75px;left:1224.00px;">GRRF</div>
<div class="a" style="top:16.29px;font-size:19.5px;line-height:19.5px;color:#666;font-weight:bold;left:1263.60px;transform:scaleX(0.84);transform-origin:0 0;">SD</div>
<div class="a" style="top:17.35px;font-size:16.6px;line-height:16.6px;color:#666;left:1303.80px;-webkit-text-stroke:0.55px #666;transform:scaleX(0.9);transform-origin:0 0;">PG</div>
<svg style="left:1342.6px;top:16.6px;" width="18.5" height="18.5" viewBox="0 0 18.5 18.5"><path d="M5.3 0.8 H14.6 A2.8 2.8 0 0 1 17.4 3.6 V14.8 A2.8 2.8 0 0 1 14.6 17.6 H3.6 A2.8 2.8 0 0 1 0.8 14.8 V5.3 Z" fill="none" stroke="#f7b733" stroke-width="1.5" stroke-linejoin="round"/><path d="M0.8 5.3 L5.3 0.8 V4 A1.5 1.5 0 0 1 3.8 5.5 Z" fill="#f7b733" stroke="#f7b733" stroke-width="1" stroke-linejoin="round"/></svg>
<svg style="left:1383px;top:17px;" width="16" height="19" viewBox="0 0 16 19"><g fill="none" stroke="#6e6e6e" stroke-width="1.55" stroke-linecap="round" stroke-linejoin="round"><path d="M1 14.5 C2.4 13 2.6 11.5 2.6 9.5 V7.5 C2.6 4.4 4.8 2.3 7.6 2.3 C10.4 2.3 12.6 4.4 12.6 7.5 V9.5 C12.6 11.5 12.8 13 14.2 14.5 Z"/><path d="M7.6 0.8 V2.3"/><path d="M5.8 17.8 H9.4"/></g></svg>
<div style="position:absolute;left:1391.8px;top:7.8px;width:15.4px;height:15.4px;border-radius:50%;background:#f05b60"></div>
<div class="a" style="top:11.34px;font-size:10px;line-height:10px;color:#fff;font-weight:bold;left:1099.50px;width:600px;text-align:center;">1</div>
<svg style="left:1420.5px;top:17px;" width="16" height="16.5" viewBox="0 0 16 16.5"><g fill="none" stroke="#6e6e6e" stroke-width="1.3" stroke-linecap="round" stroke-linejoin="round"><path d="M9 15.6 H3 A2.2 2.2 0 0 1 0.8 13.4 V3 A2.2 2.2 0 0 1 3 0.8 H10.6 A2.2 2.2 0 0 1 12.8 3 V7.6"/><path d="M3.6 4.6 H10 M3.6 7.4 H8.4 M3.6 10.2 H6.6"/><circle cx="11.2" cy="11.6" r="2.4"/><path d="M13 13.4 L14.8 15.2"/></g></svg>
<svg style="left:1457.5px;top:18.5px;" width="20.5" height="18" viewBox="0 0 20.5 18"><g fill="none" stroke="#6e6e6e" stroke-width="1.55" stroke-linejoin="round"><path d="M0.8 5.8 L10.2 1.2 L19.6 5.8 L10.2 10.4 Z"/><path d="M4.4 7.8 V12.6 C6 14.4 14.4 14.4 16 12.6 V7.8"/><path d="M2.4 6.6 V14.2"/><circle cx="2.4" cy="15.6" r="1.5"/></g></svg>
<svg style="left:1494.5px;top:8.2px;" width="35" height="35" viewBox="0 0 35 35"><circle cx="17.5" cy="17.5" r="17.3" fill="#cfcfcf"/><circle cx="17.5" cy="12.4" r="6.6" fill="#fff"/><path d="M5.2 29.6 C6.6 23 11 20.6 17.5 20.6 C24 20.6 28.4 23 29.8 29.6 A17 17 0 0 1 5.2 29.6 Z" fill="#fff"/><path d="M15.8 21 L17.5 27 L19.2 21" fill="#cfcfcf"/></svg>
<div style="position:absolute;left:258px;top:168px;width:1272px;height:536px;background:#fff;border-radius:10px;box-shadow:0 1px 3px rgba(0,0,0,0.13)"></div>
<div style="position:absolute;left:362px;top:174.5px;width:1px;height:18px;background:#d9dce0"></div>
<div style="position:absolute;left:468.3px;top:174.5px;width:1px;height:18px;background:#d9dce0"></div>
<div style="position:absolute;left:1262px;top:174.5px;width:1px;height:18px;background:#d9dce0"></div>
<div style="position:absolute;left:1395px;top:174.5px;width:1px;height:18px;background:#d9dce0"></div>
<div class="a" style="top:176.20px;font-size:13px;line-height:13px;color:#1d2939;letter-spacing:0.3px;left:366.80px;">Evento</div>
<div class="a" style="top:176.20px;font-size:13px;line-height:13px;color:#1d2939;letter-spacing:0.3px;left:472.50px;">Histórico</div>
<div class="a" style="top:176.20px;font-size:13px;line-height:13px;color:#1d2939;letter-spacing:0.7px;left:1267.40px;">Rendimento</div>
<div class="a" style="top:176.20px;font-size:13px;line-height:13px;color:#1d2939;letter-spacing:0.65px;left:1400.00px;">Desconto</div>
<svg style="left:1380.5px;top:177px;" width="10" height="12.5" viewBox="0 0 10 12.5"><path d="M5 0.8 L9 5 H1 Z" fill="none" stroke="#8a8a8a" stroke-width="1"/><path d="M1 7.2 H9 L5 11.6 Z" fill="#6e6e6e"/></svg>
<svg style="left:290.5px;top:202.5px;" width="15" height="15" viewBox="0 0 15 15"><path d="M1 1.2 H14 L9 7.2 V13.6 L6.2 12 V7.2 Z" fill="none" stroke="#6b6b6b" stroke-width="1.2" stroke-linejoin="round"/></svg>
<svg style="left:471.8px;top:205.5px;" width="13.2" height="13.2" viewBox="0 0 13.2 13.2"><circle cx="5.452" cy="5.452" r="4.752" fill="none" stroke="#6b6b6b" stroke-width="1.3"/><path d="M8.7784 8.7784 L12.7 12.7" stroke="#6b6b6b" stroke-width="1.3" stroke-linecap="round"/></svg>
<div class="a" style="top:205.00px;font-size:13px;line-height:13px;color:#b9bdc2;letter-spacing:0.27px;left:492.60px;">Pesquisar por...</div>
<div style="position:absolute;left:1523.5px;top:225.5px;width:6.5px;height:415px;background:#ececec"></div>
<div style="position:absolute;left:258px;top:345px;width:1265.5px;height:28px;background:#efefef"></div>
<div style="position:absolute;left:258px;top:225px;width:1265.5px;height:1px;background:#d6d9dd"></div>
<div style="position:absolute;left:258px;top:255px;width:1265.5px;height:1px;background:#d6d9dd"></div>
<div style="position:absolute;left:258px;top:284px;width:1265.5px;height:1px;background:#d6d9dd"></div>
<div style="position:absolute;left:258px;top:314px;width:1265.5px;height:1px;background:#d6d9dd"></div>
<div style="position:absolute;left:258px;top:344px;width:1265.5px;height:1px;background:#d6d9dd"></div>
<div style="position:absolute;left:258px;top:373px;width:1265.5px;height:1px;background:#d6d9dd"></div>
<div style="position:absolute;left:258px;top:403px;width:1265.5px;height:1px;background:#d6d9dd"></div>
<div style="position:absolute;left:258px;top:433px;width:1265.5px;height:1px;background:#d6d9dd"></div>
<div style="position:absolute;left:258px;top:463px;width:1265.5px;height:1px;background:#d6d9dd"></div>
<div style="position:absolute;left:258px;top:491px;width:1265.5px;height:1px;background:#d6d9dd"></div>
<svg style="left:267px;top:232.5px;" width="17" height="16.5" viewBox="0 0 17 16.5"><rect x="0.6" y="0.6" width="15.8" height="15.3" rx="2.5" fill="#fff" stroke="#b1b1b1" stroke-width="1.1"/></svg>
<svg style="left:292px;top:233.10000000000002px;" width="13.2" height="14" viewBox="0 0 13.2 14"><rect x="0" y="0" width="13.2" height="14" rx="2.6" fill="#19bd84"/><path d="M6.6 2.4 V11.6 M2.2 7 H11" stroke="#fff" stroke-width="1.9" stroke-linecap="round"/></svg>
<svg style="left:315.5px;top:232.8px;" width="16" height="16" viewBox="0 0 16 16"><circle cx="8" cy="8" r="7.1" fill="none" stroke="#6e6e6e" stroke-width="1.2"/><path d="M8 6.8 V12" stroke="#6e6e6e" stroke-width="1.5"/><circle cx="8" cy="4.4" r="0.9" fill="#6e6e6e"/></svg>
<svg style="left:342px;top:232.9px;" width="13.5" height="15.5" viewBox="0 0 13.5 15.5"><g fill="none" stroke="#f5636e" stroke-width="1.2" stroke-linejoin="round"><path d="M0.8 3.4 H12.7"/><path d="M4.4 3.3 V1.8 A1 1 0 0 1 5.4 0.8 H8.1 A1 1 0 0 1 9.1 1.8 V3.3"/><path d="M2 3.6 L2.8 13.2 A1.4 1.4 0 0 0 4.2 14.6 H9.3 A1.4 1.4 0 0 0 10.7 13.2 L11.5 3.6"/><path d="M5.3 6.4 V11.6 M8.2 6.4 V11.6" stroke-width="1.3"/></g></svg>
<div class="a" style="top:233.87px;font-size:12.2px;line-height:12.2px;color:#1d2939;left:365.50px;">13</div>
<div class="a" style="top:234.04px;font-size:12px;line-height:12px;color:#1d2939;letter-spacing:-0.1px;left:470.80px;">AVISO PRÉVIO INDENIZADO</div>
<div style="position:absolute;left:1059.0px;top:233.3px;width:13.2px;height:13.8px;background:#f7606b;border-radius:2.8px"></div>
<div class="a" style="top:236.30px;font-size:8.5px;line-height:8.5px;color:#fff;font-weight:bold;left:765.60px;width:600px;text-align:center;">N</div>
<div style="position:absolute;left:1084.05px;top:233.3px;width:13.2px;height:13.8px;background:#19bd84;border-radius:2.8px"></div>
<div class="a" style="top:236.30px;font-size:8.5px;line-height:8.5px;color:#fff;font-weight:bold;left:790.65px;width:600px;text-align:center;">S</div>
<div style="position:absolute;left:1109.1px;top:233.3px;width:13.2px;height:13.8px;background:#f7606b;border-radius:2.8px"></div>
<div class="a" style="top:236.30px;font-size:8.5px;line-height:8.5px;color:#fff;font-weight:bold;left:815.70px;width:600px;text-align:center;">N</div>
<div class="a" style="top:233.87px;font-size:12.2px;line-height:12.2px;color:#1d2939;letter-spacing:0.45px;right:278.55px;">35,00</div>
<div class="a" style="top:233.87px;font-size:12.2px;line-height:12.2px;color:#33b02c;letter-spacing:0.2px;right:146.30px;">1.838,52</div>
<div class="a" style="top:233.87px;font-size:12.2px;line-height:12.2px;color:#1d2939;letter-spacing:0.45px;right:14.95px;">0,00</div>
<svg style="left:267px;top:262.12px;" width="17" height="16.5" viewBox="0 0 17 16.5"><rect x="0.6" y="0.6" width="15.8" height="15.3" rx="2.5" fill="#fff" stroke="#b1b1b1" stroke-width="1.1"/></svg>
<svg style="left:292px;top:262.72px;" width="13.2" height="14" viewBox="0 0 13.2 14"><rect x="0" y="0" width="13.2" height="14" rx="2.6" fill="#19bd84"/><path d="M6.6 2.4 V11.6 M2.2 7 H11" stroke="#fff" stroke-width="1.9" stroke-linecap="round"/></svg>
<svg style="left:315.5px;top:262.42px;" width="16" height="16" viewBox="0 0 16 16"><circle cx="8" cy="8" r="7.1" fill="none" stroke="#6e6e6e" stroke-width="1.2"/><path d="M8 6.8 V12" stroke="#6e6e6e" stroke-width="1.5"/><circle cx="8" cy="4.4" r="0.9" fill="#6e6e6e"/></svg>
<svg style="left:342px;top:262.52000000000004px;" width="13.5" height="15.5" viewBox="0 0 13.5 15.5"><g fill="none" stroke="#f5636e" stroke-width="1.2" stroke-linejoin="round"><path d="M0.8 3.4 H12.7"/><path d="M4.4 3.3 V1.8 A1 1 0 0 1 5.4 0.8 H8.1 A1 1 0 0 1 9.1 1.8 V3.3"/><path d="M2 3.6 L2.8 13.2 A1.4 1.4 0 0 0 4.2 14.6 H9.3 A1.4 1.4 0 0 0 10.7 13.2 L11.5 3.6"/><path d="M5.3 6.4 V11.6 M8.2 6.4 V11.6" stroke-width="1.3"/></g></svg>
<div class="a" style="top:263.49px;font-size:12.2px;line-height:12.2px;color:#1d2939;left:365.50px;">14</div>
<div class="a" style="top:263.66px;font-size:12px;line-height:12px;color:#1d2939;letter-spacing:-0.1px;left:470.80px;">SALDO DE SALÁRIO</div>
<div style="position:absolute;left:1059.0px;top:262.92px;width:13.2px;height:13.8px;background:#19bd84;border-radius:2.8px"></div>
<div class="a" style="top:265.92px;font-size:8.5px;line-height:8.5px;color:#fff;font-weight:bold;left:765.60px;width:600px;text-align:center;">S</div>
<div style="position:absolute;left:1084.05px;top:262.92px;width:13.2px;height:13.8px;background:#19bd84;border-radius:2.8px"></div>
<div class="a" style="top:265.92px;font-size:8.5px;line-height:8.5px;color:#fff;font-weight:bold;left:790.65px;width:600px;text-align:center;">S</div>
<div style="position:absolute;left:1109.1px;top:262.92px;width:13.2px;height:13.8px;background:#19bd84;border-radius:2.8px"></div>
<div class="a" style="top:265.92px;font-size:8.5px;line-height:8.5px;color:#fff;font-weight:bold;left:815.70px;width:600px;text-align:center;">S</div>
<div class="a" style="top:263.49px;font-size:12.2px;line-height:12.2px;color:#1d2939;letter-spacing:0.45px;right:278.55px;">24,00</div>
<div class="a" style="top:263.49px;font-size:12.2px;line-height:12.2px;color:#33b02c;letter-spacing:0.2px;right:146.30px;">1.214,40</div>
<div class="a" style="top:263.49px;font-size:12.2px;line-height:12.2px;color:#1d2939;letter-spacing:0.45px;right:14.95px;">0,00</div>
<svg style="left:267px;top:291.74px;" width="17" height="16.5" viewBox="0 0 17 16.5"><rect x="0.6" y="0.6" width="15.8" height="15.3" rx="2.5" fill="#fff" stroke="#b1b1b1" stroke-width="1.1"/></svg>
<svg style="left:292px;top:292.34000000000003px;" width="13.2" height="14" viewBox="0 0 13.2 14"><rect x="0" y="0" width="13.2" height="14" rx="2.6" fill="#19bd84"/><path d="M6.6 2.4 V11.6 M2.2 7 H11" stroke="#fff" stroke-width="1.9" stroke-linecap="round"/></svg>
<svg style="left:315.5px;top:292.04px;" width="16" height="16" viewBox="0 0 16 16"><circle cx="8" cy="8" r="7.1" fill="none" stroke="#6e6e6e" stroke-width="1.2"/><path d="M8 6.8 V12" stroke="#6e6e6e" stroke-width="1.5"/><circle cx="8" cy="4.4" r="0.9" fill="#6e6e6e"/></svg>
<svg style="left:342px;top:292.14000000000004px;" width="13.5" height="15.5" viewBox="0 0 13.5 15.5"><g fill="none" stroke="#f5636e" stroke-width="1.2" stroke-linejoin="round"><path d="M0.8 3.4 H12.7"/><path d="M4.4 3.3 V1.8 A1 1 0 0 1 5.4 0.8 H8.1 A1 1 0 0 1 9.1 1.8 V3.3"/><path d="M2 3.6 L2.8 13.2 A1.4 1.4 0 0 0 4.2 14.6 H9.3 A1.4 1.4 0 0 0 10.7 13.2 L11.5 3.6"/><path d="M5.3 6.4 V11.6 M8.2 6.4 V11.6" stroke-width="1.3"/></g></svg>
<div class="a" style="top:293.11px;font-size:12.2px;line-height:12.2px;color:#1d2939;left:365.50px;">22</div>
<div class="a" style="top:293.28px;font-size:12px;line-height:12px;color:#1d2939;letter-spacing:0.33px;left:470.80px;">13º SALÁRIO - Rescisão</div>
<div style="position:absolute;left:1059.0px;top:292.54px;width:13.2px;height:13.8px;background:#f7606b;border-radius:2.8px"></div>
<div class="a" style="top:295.54px;font-size:8.5px;line-height:8.5px;color:#fff;font-weight:bold;left:765.60px;width:600px;text-align:center;">N</div>
<div style="position:absolute;left:1084.05px;top:292.54px;width:13.2px;height:13.8px;background:#19bd84;border-radius:2.8px"></div>
<div class="a" style="top:295.54px;font-size:8.5px;line-height:8.5px;color:#fff;font-weight:bold;left:790.65px;width:600px;text-align:center;">S</div>
<div style="position:absolute;left:1109.1px;top:292.54px;width:13.2px;height:13.8px;background:#f7606b;border-radius:2.8px"></div>
<div class="a" style="top:295.54px;font-size:8.5px;line-height:8.5px;color:#fff;font-weight:bold;left:815.70px;width:600px;text-align:center;">N</div>
<div class="a" style="top:293.11px;font-size:12.2px;line-height:12.2px;color:#1d2939;letter-spacing:0.45px;right:278.55px;">5,00</div>
<div class="a" style="top:293.11px;font-size:12.2px;line-height:12.2px;color:#33b02c;letter-spacing:0.45px;right:146.05px;">661,20</div>
<div class="a" style="top:293.11px;font-size:12.2px;line-height:12.2px;color:#1d2939;letter-spacing:0.45px;right:14.95px;">0,00</div>
<svg style="left:267px;top:321.36px;" width="17" height="16.5" viewBox="0 0 17 16.5"><rect x="0.6" y="0.6" width="15.8" height="15.3" rx="2.5" fill="#fff" stroke="#b1b1b1" stroke-width="1.1"/></svg>
<svg style="left:292px;top:321.96000000000004px;" width="13.2" height="14" viewBox="0 0 13.2 14"><rect x="0" y="0" width="13.2" height="14" rx="2.6" fill="#19bd84"/><path d="M6.6 2.4 V11.6 M2.2 7 H11" stroke="#fff" stroke-width="1.9" stroke-linecap="round"/></svg>
<svg style="left:315.5px;top:321.66px;" width="16" height="16" viewBox="0 0 16 16"><circle cx="8" cy="8" r="7.1" fill="none" stroke="#6e6e6e" stroke-width="1.2"/><path d="M8 6.8 V12" stroke="#6e6e6e" stroke-width="1.5"/><circle cx="8" cy="4.4" r="0.9" fill="#6e6e6e"/></svg>
<svg style="left:342px;top:321.76000000000005px;" width="13.5" height="15.5" viewBox="0 0 13.5 15.5"><g fill="none" stroke="#f5636e" stroke-width="1.2" stroke-linejoin="round"><path d="M0.8 3.4 H12.7"/><path d="M4.4 3.3 V1.8 A1 1 0 0 1 5.4 0.8 H8.1 A1 1 0 0 1 9.1 1.8 V3.3"/><path d="M2 3.6 L2.8 13.2 A1.4 1.4 0 0 0 4.2 14.6 H9.3 A1.4 1.4 0 0 0 10.7 13.2 L11.5 3.6"/><path d="M5.3 6.4 V11.6 M8.2 6.4 V11.6" stroke-width="1.3"/></g></svg>
<div class="a" style="top:322.73px;font-size:12.2px;line-height:12.2px;color:#1d2939;left:365.50px;">229</div>
<div class="a" style="top:322.90px;font-size:12px;line-height:12px;color:#1d2939;letter-spacing:-0.1px;left:470.80px;">13º SALÁRIO INDENIZADO</div>
<div style="position:absolute;left:1059.0px;top:322.16px;width:13.2px;height:13.8px;background:#f7606b;border-radius:2.8px"></div>
<div class="a" style="top:325.16px;font-size:8.5px;line-height:8.5px;color:#fff;font-weight:bold;left:765.60px;width:600px;text-align:center;">N</div>
<div style="position:absolute;left:1084.05px;top:322.16px;width:13.2px;height:13.8px;background:#19bd84;border-radius:2.8px"></div>
<div class="a" style="top:325.16px;font-size:8.5px;line-height:8.5px;color:#fff;font-weight:bold;left:790.65px;width:600px;text-align:center;">S</div>
<div style="position:absolute;left:1109.1px;top:322.16px;width:13.2px;height:13.8px;background:#f7606b;border-radius:2.8px"></div>
<div class="a" style="top:325.16px;font-size:8.5px;line-height:8.5px;color:#fff;font-weight:bold;left:815.70px;width:600px;text-align:center;">N</div>
<div class="a" style="top:322.73px;font-size:12.2px;line-height:12.2px;color:#1d2939;letter-spacing:0.45px;right:278.55px;">1,00</div>
<div class="a" style="top:322.73px;font-size:12.2px;line-height:12.2px;color:#33b02c;letter-spacing:0.45px;right:146.05px;">132,24</div>
<div class="a" style="top:322.73px;font-size:12.2px;line-height:12.2px;color:#1d2939;letter-spacing:0.45px;right:14.95px;">0,00</div>
<svg style="left:267px;top:350.98px;" width="17" height="16.5" viewBox="0 0 17 16.5"><rect x="0.6" y="0.6" width="15.8" height="15.3" rx="2.5" fill="#f3f3f3" stroke="#b1b1b1" stroke-width="1.1"/><path d="M4.6 8.3 L7.2 10.8 L12 5.8" fill="none" stroke="#5fd0a8" stroke-width="1.2" stroke-linecap="round" stroke-linejoin="round"/></svg>
<svg style="left:292px;top:351.58000000000004px;" width="13.2" height="14" viewBox="0 0 13.2 14"><rect x="0" y="0" width="13.2" height="14" rx="2.6" fill="#19bd84"/><path d="M6.6 2.4 V11.6 M2.2 7 H11" stroke="#fff" stroke-width="1.9" stroke-linecap="round"/></svg>
<svg style="left:315.5px;top:351.28000000000003px;" width="16" height="16" viewBox="0 0 16 16"><circle cx="8" cy="8" r="7.1" fill="none" stroke="#6e6e6e" stroke-width="1.2"/><path d="M8 6.8 V12" stroke="#6e6e6e" stroke-width="1.5"/><circle cx="8" cy="4.4" r="0.9" fill="#6e6e6e"/></svg>
<svg style="left:342px;top:351.38000000000005px;" width="13.5" height="15.5" viewBox="0 0 13.5 15.5"><g fill="none" stroke="#f5636e" stroke-width="1.2" stroke-linejoin="round"><path d="M0.8 3.4 H12.7"/><path d="M4.4 3.3 V1.8 A1 1 0 0 1 5.4 0.8 H8.1 A1 1 0 0 1 9.1 1.8 V3.3"/><path d="M2 3.6 L2.8 13.2 A1.4 1.4 0 0 0 4.2 14.6 H9.3 A1.4 1.4 0 0 0 10.7 13.2 L11.5 3.6"/><path d="M5.3 6.4 V11.6 M8.2 6.4 V11.6" stroke-width="1.3"/></g></svg>
<div class="a" style="top:352.35px;font-size:12.2px;line-height:12.2px;color:#1d2939;left:365.50px;">332</div>
<div class="a" style="top:352.52px;font-size:12px;line-height:12px;color:#1d2939;letter-spacing:-0.1px;left:470.80px;">1/12 FÉRIAS S/ AVISO PRÉVIO INDENIZADO</div>
<div style="position:absolute;left:1059.0px;top:351.78000000000003px;width:13.2px;height:13.8px;background:#f7606b;border-radius:2.8px"></div>
<div class="a" style="top:354.78px;font-size:8.5px;line-height:8.5px;color:#fff;font-weight:bold;left:765.60px;width:600px;text-align:center;">N</div>
<div style="position:absolute;left:1084.05px;top:351.78000000000003px;width:13.2px;height:13.8px;background:#f7606b;border-radius:2.8px"></div>
<div class="a" style="top:354.78px;font-size:8.5px;line-height:8.5px;color:#fff;font-weight:bold;left:790.65px;width:600px;text-align:center;">N</div>
<div style="position:absolute;left:1109.1px;top:351.78000000000003px;width:13.2px;height:13.8px;background:#f7606b;border-radius:2.8px"></div>
<div class="a" style="top:354.78px;font-size:8.5px;line-height:8.5px;color:#fff;font-weight:bold;left:815.70px;width:600px;text-align:center;">N</div>
<div class="a" style="top:352.35px;font-size:12.2px;line-height:12.2px;color:#1d2939;letter-spacing:0.45px;right:278.55px;">1,00</div>
<div class="a" style="top:352.35px;font-size:12.2px;line-height:12.2px;color:#33b02c;letter-spacing:0.45px;right:146.05px;">131,32</div>
<div class="a" style="top:352.35px;font-size:12.2px;line-height:12.2px;color:#1d2939;letter-spacing:0.45px;right:14.95px;">0,00</div>
<svg style="left:267px;top:380.59999999999997px;" width="17" height="16.5" viewBox="0 0 17 16.5"><rect x="0.6" y="0.6" width="15.8" height="15.3" rx="2.5" fill="#fff" stroke="#b1b1b1" stroke-width="1.1"/></svg>
<svg style="left:292px;top:381.2px;" width="13.2" height="14" viewBox="0 0 13.2 14"><rect x="0" y="0" width="13.2" height="14" rx="2.6" fill="#19bd84"/><path d="M6.6 2.4 V11.6 M2.2 7 H11" stroke="#fff" stroke-width="1.9" stroke-linecap="round"/></svg>
<svg style="left:315.5px;top:380.9px;" width="16" height="16" viewBox="0 0 16 16"><circle cx="8" cy="8" r="7.1" fill="none" stroke="#6e6e6e" stroke-width="1.2"/><path d="M8 6.8 V12" stroke="#6e6e6e" stroke-width="1.5"/><circle cx="8" cy="4.4" r="0.9" fill="#6e6e6e"/></svg>
<svg style="left:342px;top:381.0px;" width="13.5" height="15.5" viewBox="0 0 13.5 15.5"><g fill="none" stroke="#f5636e" stroke-width="1.2" stroke-linejoin="round"><path d="M0.8 3.4 H12.7"/><path d="M4.4 3.3 V1.8 A1 1 0 0 1 5.4 0.8 H8.1 A1 1 0 0 1 9.1 1.8 V3.3"/><path d="M2 3.6 L2.8 13.2 A1.4 1.4 0 0 0 4.2 14.6 H9.3 A1.4 1.4 0 0 0 10.7 13.2 L11.5 3.6"/><path d="M5.3 6.4 V11.6 M8.2 6.4 V11.6" stroke-width="1.3"/></g></svg>
<div class="a" style="top:381.97px;font-size:12.2px;line-height:12.2px;color:#1d2939;left:365.50px;">333</div>
<div class="a" style="top:382.14px;font-size:12px;line-height:12px;color:#1d2939;letter-spacing:-0.1px;left:470.80px;">1/12 FÉRIAS S/ AVISO PRÉVIO INDENIZADO 1/3</div>
<div style="position:absolute;left:1059.0px;top:381.4px;width:13.2px;height:13.8px;background:#f7606b;border-radius:2.8px"></div>
<div class="a" style="top:384.40px;font-size:8.5px;line-height:8.5px;color:#fff;font-weight:bold;left:765.60px;width:600px;text-align:center;">N</div>
<div style="position:absolute;left:1084.05px;top:381.4px;width:13.2px;height:13.8px;background:#f7606b;border-radius:2.8px"></div>
<div class="a" style="top:384.40px;font-size:8.5px;line-height:8.5px;color:#fff;font-weight:bold;left:790.65px;width:600px;text-align:center;">N</div>
<div style="position:absolute;left:1109.1px;top:381.4px;width:13.2px;height:13.8px;background:#f7606b;border-radius:2.8px"></div>
<div class="a" style="top:384.40px;font-size:8.5px;line-height:8.5px;color:#fff;font-weight:bold;left:815.70px;width:600px;text-align:center;">N</div>
<div class="a" style="top:381.97px;font-size:12.2px;line-height:12.2px;color:#1d2939;letter-spacing:0.45px;right:278.55px;">1,00</div>
<div class="a" style="top:381.97px;font-size:12.2px;line-height:12.2px;color:#33b02c;letter-spacing:0.45px;right:146.05px;">43,77</div>
<div class="a" style="top:381.97px;font-size:12.2px;line-height:12.2px;color:#1d2939;letter-spacing:0.45px;right:14.95px;">0,00</div>
<svg style="left:267px;top:410.21999999999997px;" width="17" height="16.5" viewBox="0 0 17 16.5"><rect x="0.6" y="0.6" width="15.8" height="15.3" rx="2.5" fill="#fff" stroke="#b1b1b1" stroke-width="1.1"/></svg>
<svg style="left:292px;top:410.82px;" width="13.2" height="14" viewBox="0 0 13.2 14"><rect x="0" y="0" width="13.2" height="14" rx="2.6" fill="#19bd84"/><path d="M6.6 2.4 V11.6 M2.2 7 H11" stroke="#fff" stroke-width="1.9" stroke-linecap="round"/></svg>
<svg style="left:315.5px;top:410.52px;" width="16" height="16" viewBox="0 0 16 16"><circle cx="8" cy="8" r="7.1" fill="none" stroke="#6e6e6e" stroke-width="1.2"/><path d="M8 6.8 V12" stroke="#6e6e6e" stroke-width="1.5"/><circle cx="8" cy="4.4" r="0.9" fill="#6e6e6e"/></svg>
<svg style="left:342px;top:410.62px;" width="13.5" height="15.5" viewBox="0 0 13.5 15.5"><g fill="none" stroke="#f5636e" stroke-width="1.2" stroke-linejoin="round"><path d="M0.8 3.4 H12.7"/><path d="M4.4 3.3 V1.8 A1 1 0 0 1 5.4 0.8 H8.1 A1 1 0 0 1 9.1 1.8 V3.3"/><path d="M2 3.6 L2.8 13.2 A1.4 1.4 0 0 0 4.2 14.6 H9.3 A1.4 1.4 0 0 0 10.7 13.2 L11.5 3.6"/><path d="M5.3 6.4 V11.6 M8.2 6.4 V11.6" stroke-width="1.3"/></g></svg>
<div class="a" style="top:411.59px;font-size:12.2px;line-height:12.2px;color:#1d2939;left:365.50px;">88</div>
<div class="a" style="top:411.76px;font-size:12px;line-height:12px;color:#1d2939;letter-spacing:-0.05px;left:470.80px;">DIAS DE AFASTAMENTO POR CONTA DA EMPRESA</div>
<div style="position:absolute;left:1059.0px;top:411.02px;width:13.2px;height:13.8px;background:#19bd84;border-radius:2.8px"></div>
<div class="a" style="top:414.02px;font-size:8.5px;line-height:8.5px;color:#fff;font-weight:bold;left:765.60px;width:600px;text-align:center;">S</div>
<div style="position:absolute;left:1084.05px;top:411.02px;width:13.2px;height:13.8px;background:#19bd84;border-radius:2.8px"></div>
<div class="a" style="top:414.02px;font-size:8.5px;line-height:8.5px;color:#fff;font-weight:bold;left:790.65px;width:600px;text-align:center;">S</div>
<div style="position:absolute;left:1109.1px;top:411.02px;width:13.2px;height:13.8px;background:#19bd84;border-radius:2.8px"></div>
<div class="a" style="top:414.02px;font-size:8.5px;line-height:8.5px;color:#fff;font-weight:bold;left:815.70px;width:600px;text-align:center;">S</div>
<div class="a" style="top:411.59px;font-size:12.2px;line-height:12.2px;color:#1d2939;letter-spacing:0.45px;right:278.55px;">30,00</div>
<div class="a" style="top:411.59px;font-size:12.2px;line-height:12.2px;color:#33b02c;letter-spacing:0.45px;right:146.05px;">40,00</div>
<div class="a" style="top:411.59px;font-size:12.2px;line-height:12.2px;color:#1d2939;letter-spacing:0.45px;right:14.95px;">0,00</div>
<svg style="left:267px;top:439.84px;" width="17" height="16.5" viewBox="0 0 17 16.5"><rect x="0.6" y="0.6" width="15.8" height="15.3" rx="2.5" fill="#fff" stroke="#b1b1b1" stroke-width="1.1"/></svg>
<svg style="left:292px;top:440.44px;" width="13.2" height="14" viewBox="0 0 13.2 14"><rect x="0" y="0" width="13.2" height="14" rx="2.6" fill="#f7606b"/><path d="M2.8 7 H10.2" stroke="#fff" stroke-width="2.4"/></svg>
<svg style="left:315.5px;top:440.14px;" width="16" height="16" viewBox="0 0 16 16"><circle cx="8" cy="8" r="7.1" fill="none" stroke="#6e6e6e" stroke-width="1.2"/><path d="M8 6.8 V12" stroke="#6e6e6e" stroke-width="1.5"/><circle cx="8" cy="4.4" r="0.9" fill="#6e6e6e"/></svg>
<svg style="left:342px;top:440.24px;" width="13.5" height="15.5" viewBox="0 0 13.5 15.5"><g fill="none" stroke="#f5636e" stroke-width="1.2" stroke-linejoin="round"><path d="M0.8 3.4 H12.7"/><path d="M4.4 3.3 V1.8 A1 1 0 0 1 5.4 0.8 H8.1 A1 1 0 0 1 9.1 1.8 V3.3"/><path d="M2 3.6 L2.8 13.2 A1.4 1.4 0 0 0 4.2 14.6 H9.3 A1.4 1.4 0 0 0 10.7 13.2 L11.5 3.6"/><path d="M5.3 6.4 V11.6 M8.2 6.4 V11.6" stroke-width="1.3"/></g></svg>
<div class="a" style="top:441.21px;font-size:12.2px;line-height:12.2px;color:#1d2939;left:365.50px;">201</div>
<div class="a" style="top:441.38px;font-size:12px;line-height:12px;color:#1d2939;letter-spacing:-0.38px;left:470.80px;">INSS SOBRE SALÁRIOS</div>
<div style="position:absolute;left:1059.0px;top:440.64px;width:13.2px;height:13.8px;background:#f7606b;border-radius:2.8px"></div>
<div class="a" style="top:443.64px;font-size:8.5px;line-height:8.5px;color:#fff;font-weight:bold;left:765.60px;width:600px;text-align:center;">N</div>
<div style="position:absolute;left:1084.05px;top:440.64px;width:13.2px;height:13.8px;background:#f7606b;border-radius:2.8px"></div>
<div class="a" style="top:443.64px;font-size:8.5px;line-height:8.5px;color:#fff;font-weight:bold;left:790.65px;width:600px;text-align:center;">N</div>
<div style="position:absolute;left:1109.1px;top:440.64px;width:13.2px;height:13.8px;background:#f7606b;border-radius:2.8px"></div>
<div class="a" style="top:443.64px;font-size:8.5px;line-height:8.5px;color:#fff;font-weight:bold;left:815.70px;width:600px;text-align:center;">N</div>
<div class="a" style="top:441.21px;font-size:12.2px;line-height:12.2px;color:#1d2939;letter-spacing:0.45px;right:278.55px;">7,50</div>
<div class="a" style="top:441.21px;font-size:12.2px;line-height:12.2px;color:#1d2939;letter-spacing:0.45px;right:146.05px;">0,00</div>
<div class="a" style="top:441.21px;font-size:12.2px;line-height:12.2px;color:#ec3b22;letter-spacing:0.45px;right:14.95px;">94,08</div>
<svg style="left:267px;top:469.46px;" width="17" height="16.5" viewBox="0 0 17 16.5"><rect x="0.6" y="0.6" width="15.8" height="15.3" rx="2.5" fill="#fff" stroke="#b1b1b1" stroke-width="1.1"/></svg>
<svg style="left:292px;top:470.06px;" width="13.2" height="14" viewBox="0 0 13.2 14"><rect x="0" y="0" width="13.2" height="14" rx="2.6" fill="#f7606b"/><path d="M2.8 7 H10.2" stroke="#fff" stroke-width="2.4"/></svg>
<svg style="left:315.5px;top:469.76px;" width="16" height="16" viewBox="0 0 16 16"><circle cx="8" cy="8" r="7.1" fill="none" stroke="#6e6e6e" stroke-width="1.2"/><path d="M8 6.8 V12" stroke="#6e6e6e" stroke-width="1.5"/><circle cx="8" cy="4.4" r="0.9" fill="#6e6e6e"/></svg>
<svg style="left:342px;top:469.86px;" width="13.5" height="15.5" viewBox="0 0 13.5 15.5"><g fill="none" stroke="#f5636e" stroke-width="1.2" stroke-linejoin="round"><path d="M0.8 3.4 H12.7"/><path d="M4.4 3.3 V1.8 A1 1 0 0 1 5.4 0.8 H8.1 A1 1 0 0 1 9.1 1.8 V3.3"/><path d="M2 3.6 L2.8 13.2 A1.4 1.4 0 0 0 4.2 14.6 H9.3 A1.4 1.4 0 0 0 10.7 13.2 L11.5 3.6"/><path d="M5.3 6.4 V11.6 M8.2 6.4 V11.6" stroke-width="1.3"/></g></svg>
<div class="a" style="top:470.83px;font-size:12.2px;line-height:12.2px;color:#1d2939;left:365.50px;">286</div>
<div class="a" style="top:471.00px;font-size:12px;line-height:12px;color:#1d2939;letter-spacing:-0.3px;left:470.80px;">INSS SOBRE DÉCIMO TERCEIRO</div>
<div style="position:absolute;left:1059.0px;top:470.26px;width:13.2px;height:13.8px;background:#f7606b;border-radius:2.8px"></div>
<div class="a" style="top:473.26px;font-size:8.5px;line-height:8.5px;color:#fff;font-weight:bold;left:765.60px;width:600px;text-align:center;">N</div>
<div style="position:absolute;left:1084.05px;top:470.26px;width:13.2px;height:13.8px;background:#f7606b;border-radius:2.8px"></div>
<div class="a" style="top:473.26px;font-size:8.5px;line-height:8.5px;color:#fff;font-weight:bold;left:790.65px;width:600px;text-align:center;">N</div>
<div style="position:absolute;left:1109.1px;top:470.26px;width:13.2px;height:13.8px;background:#f7606b;border-radius:2.8px"></div>
<div class="a" style="top:473.26px;font-size:8.5px;line-height:8.5px;color:#fff;font-weight:bold;left:815.70px;width:600px;text-align:center;">N</div>
<div class="a" style="top:470.83px;font-size:12.2px;line-height:12.2px;color:#1d2939;letter-spacing:0.45px;right:278.55px;">7,50</div>
<div class="a" style="top:470.83px;font-size:12.2px;line-height:12.2px;color:#1d2939;letter-spacing:0.45px;right:146.05px;">0,00</div>
<div class="a" style="top:470.83px;font-size:12.2px;line-height:12.2px;color:#ec3b22;letter-spacing:0.45px;right:14.95px;">59,51</div>
<div class="a" style="top:651.87px;font-size:12.2px;line-height:12.2px;color:#1d2939;letter-spacing:0.15px;right:146.85px;">4.061,45</div>
<div class="a" style="top:651.87px;font-size:12.2px;line-height:12.2px;color:#1d2939;letter-spacing:0.3px;right:15.50px;">153,59</div>
<div class="a" style="top:676.20px;font-size:12.4px;line-height:12.4px;color:#14233a;letter-spacing:0.65px;left:1339.90px;-webkit-text-stroke:0.12px #14233a;">Líquido:</div>
<div class="a" style="top:676.37px;font-size:12.2px;line-height:12.2px;color:#1d2939;letter-spacing:0.4px;right:15.40px;">3.907,86</div>
<div class="a" style="top:725.07px;font-size:13.5px;line-height:13.5px;color:#1d2939;letter-spacing:0.45px;left:264.10px;">30 / Página</div>
<svg style="left:349.3px;top:729.5px;" width="9.8" height="5.6" viewBox="0 0 9.8 5.6"><path d="M0 0 L4.9 5.6 L9.8 0" fill="none" stroke="#555" stroke-width="1.4" stroke-linecap="round" stroke-linejoin="round"/></svg>
<svg style="left:379px;top:727px;" width="5" height="9" viewBox="0 0 5 9"><path d="M5 0 L0 4.5 L5 9" fill="none" stroke="#b5b8bc" stroke-width="1.2" stroke-linecap="round" stroke-linejoin="round"/></svg>
<svg style="left:386.5px;top:727px;" width="5" height="9" viewBox="0 0 5 9"><path d="M5 0 L0 4.5 L5 9" fill="none" stroke="#b5b8bc" stroke-width="1.2" stroke-linecap="round" stroke-linejoin="round"/></svg>
<svg style="left:413px;top:727px;" width="5" height="9" viewBox="0 0 5 9"><path d="M5 0 L0 4.5 L5 9" fill="none" stroke="#b5b8bc" stroke-width="1.2" stroke-linecap="round" stroke-linejoin="round"/></svg>
<div style="position:absolute;left:432.2px;top:722.2px;width:53.5px;height:19.6px;border-radius:10px;background:#fff;border:1px solid #cfd3d8"></div>
<div class="a" style="top:725.72px;font-size:12.5px;line-height:12.5px;color:#1d2939;left:158.50px;width:600px;text-align:center;">1</div>
<div class="a" style="top:725.37px;font-size:13.5px;line-height:13.5px;color:#1d2939;letter-spacing:-0.2px;left:492.60px;">/ 1</div>
<svg style="left:520px;top:727px;" width="5" height="9" viewBox="0 0 5 9"><path d="M0 0 L5 4.5 L0 9" fill="none" stroke="#b5b8bc" stroke-width="1.2" stroke-linecap="round" stroke-linejoin="round"/></svg>
<svg style="left:546.5px;top:727px;" width="5" height="9" viewBox="0 0 5 9"><path d="M0 0 L5 4.5 L0 9" fill="none" stroke="#b5b8bc" stroke-width="1.2" stroke-linecap="round" stroke-linejoin="round"/></svg>
<svg style="left:553.8px;top:727px;" width="5" height="9" viewBox="0 0 5 9"><path d="M0 0 L5 4.5 L0 9" fill="none" stroke="#b5b8bc" stroke-width="1.2" stroke-linecap="round" stroke-linejoin="round"/></svg>
<div class="a" style="top:725.37px;font-size:13.5px;line-height:13.5px;color:#1d2939;letter-spacing:0.2px;left:570.30px;">9 Registros</div>
<svg style="left:1489.3px;top:714px;" width="37" height="37" viewBox="0 0 37 37"><defs><clipPath id="avc"><path d="M0 18.5 A18.5 18.5 0 1 1 18.5 37 H0 Z"/></clipPath></defs><g clip-path="url(#avc)"><rect width="37" height="37" fill="#2b2328"/><rect x="30" y="0" width="7" height="37" fill="#4a4448"/><rect x="16" y="27" width="8" height="7" fill="#e3ad90"/><path d="M11 18 C11 11 15 8.5 20 8.5 C25 8.5 28.5 12 28.5 18 C28.5 25 25 30 20 30 C15 30 11 25 11 18 Z" fill="#efc0a3"/><path d="M8 17 C10 8 17 4 24 5.5 C20 8 15 12 10.5 18 Z" fill="#2b2328"/><path d="M25 7 C29 11 30.5 18 29.5 27 L33 31 V5 Z" fill="#2b2328"/><g fill="none" stroke="#6c5a5a" stroke-width="0.9"><rect x="12.8" y="16" width="6" height="4" rx="1.6"/><rect x="20.8" y="16" width="6" height="4" rx="1.6"/></g><path d="M17.5 25 C19 26 21 26 22.5 25" stroke="#b46a5c" stroke-width="0.9" fill="none"/><path d="M8 37 C10 33 13.5 32 16 32 L20 35.5 L24 32 C26.5 32 29.5 33 31.5 37 Z" fill="#a9cdee"/></g><path d="M0.8 37 V18.5 A17.7 17.7 0 1 1 18.5 36.2" fill="none" stroke="#2a78e4" stroke-width="1.4"/></svg>
<div style="position:absolute;left:1045px;top:150px;width:179px;height:47px;background:#0d3461;border-radius:3px"></div>
<div style="position:absolute;left:1131px;top:149px;width:9px;height:2px;background:#0d3461"></div>
<div class="a" style="top:156.49px;font-size:12.3px;line-height:12.3px;color:#fff;letter-spacing:-0.1px;left:835.00px;width:600px;text-align:center;">Eliminar Rescisão do</div>
<div class="a" style="top:175.59px;font-size:12.3px;line-height:12.3px;color:#fff;left:835.00px;width:600px;text-align:center;">Empregado</div>
</body></html>
